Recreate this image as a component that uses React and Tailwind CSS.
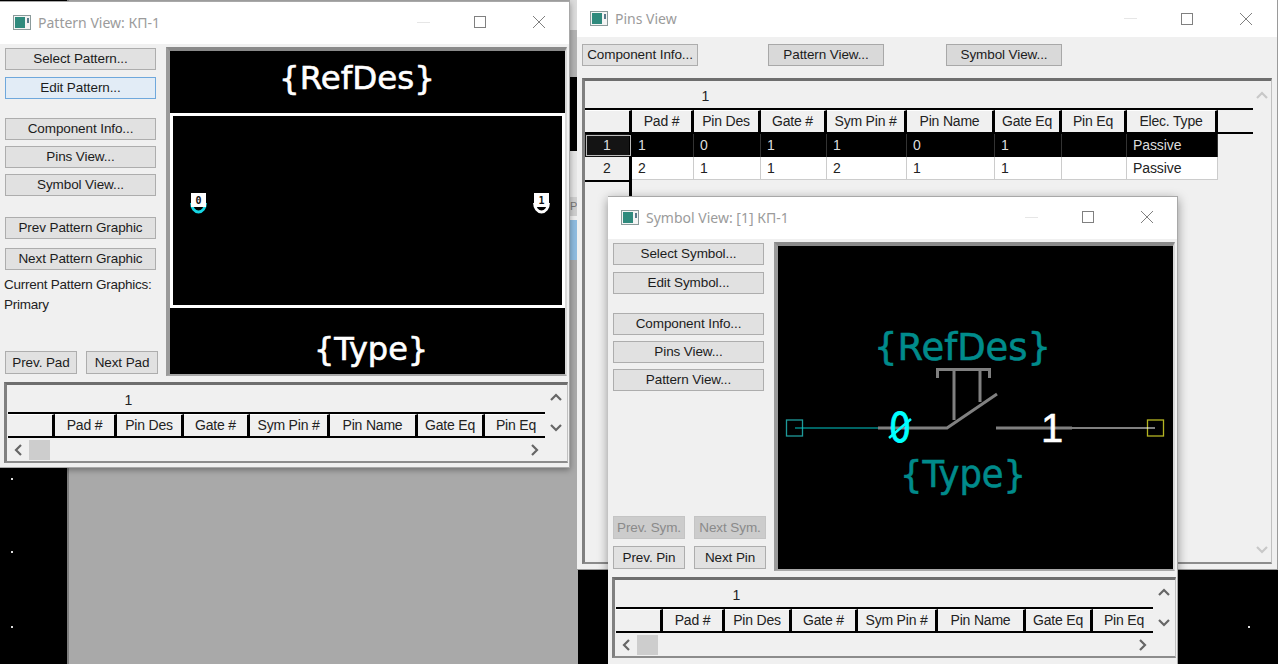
const columns = ["Pad #", "Pin Des", "Gate #", "Sym Pin #", "Pin Name", "Gate Eq", "Pin Eq", "Elec. Type"];
const colWidths = ["w-[62px]", "w-[67px]", "w-[66px]", "w-[80px]", "w-[88px]", "w-[67px]", "w-[65px]", "w-[91px]"];
const pinRows = [
  { id: "1", cells: ["1", "0", "1", "1", "0", "1", "", "Passive"], active: true },
  { id: "2", cells: ["2", "1", "1", "2", "1", "1", "", "Passive"], active: false },
];

function WindowIcon() {
  return (
    <svg width="18" height="15" viewBox="0 0 18 15" className="shrink-0">
      <rect x="0.5" y="0.5" width="17" height="14" fill="#f4f4f4" stroke="#8a9a9a" />
      <rect x="2" y="2" width="10" height="11" fill="#2f8a7d" />
      <rect x="14" y="3" width="2" height="5" fill="#5a7a8a" />
    </svg>
  );
}

function TitleBar({ title, className }) {
  return (
    <div className={`flex items-center bg-white pl-[13px] ${className}`}>
      <WindowIcon />
      <span className="ml-[7px] font-['Noto_Sans'] text-[14px] text-[#9b9b9b]">{title}</span>
      <div className="ml-auto h-px w-[13px] bg-[#e6e6e6]" />
      <div className="ml-[44px] h-[12px] w-[12px] border border-[#808080]" />
      <svg width="12" height="12" viewBox="0 0 12 12" className="ml-[47px]">
        <path d="M0 0L12 12M12 0L0 12" stroke="#808080" strokeWidth="1" />
      </svg>
    </div>
  );
}

function Btn({ children, className = "", variant = "normal" }) {
  const look = {
    normal: "bg-[#e1e1e1] border-[#adadad] text-[#1c1c1c]",
    dark: "bg-[#d9d9d9] border-[#a8a8a8] text-[#1c1c1c]",
    focus: "bg-[#e2ecf6] border-[#6fa8dc] text-[#1c1c1c]",
    off: "bg-[#cccccc] border-[#c4c4c4] text-[#8a8a8a]",
  }[variant];
  return (
    <button className={`flex h-[22px] items-center justify-center border pt-[1px] text-[13.5px] tracking-[-0.1px] ${look} ${className}`}>
      {children}
    </button>
  );
}

function Chevron({ dir, color = "#666666" }) {
  const points = {
    up: "1,7 6,2 11,7",
    down: "1,2 6,7 11,2",
    left: "7,1 2,6 7,11",
    right: "2,1 7,6 2,11",
  }[dir];
  const size = dir === "up" || dir === "down" ? "w-[12px] h-[9px]" : "w-[9px] h-[12px]";
  const box = dir === "up" || dir === "down" ? "0 0 12 9" : "0 0 9 12";
  return (
    <svg viewBox={box} className={`shrink-0 ${size}`}>
      <polyline points={points} fill="none" stroke={color} strokeWidth="2.2" />
    </svg>
  );
}

function HeaderRow({ count }) {
  return (
    <div className="flex h-[26px] w-full min-w-max shrink-0 items-stretch border-y-2 border-black bg-[#f0f0f0]">
      <div className="w-[47px] border-r-[3px] border-black border-t border-t-white bg-[#f0f0f0]" />
      {columns.slice(0, count).map((c, i) => (
        <div
          key={c}
          className={`flex items-center justify-center border-r-[3px] border-t border-r-black border-t-white bg-[#f0f0f0] text-[14px] tracking-[-0.2px] text-[#222] ${colWidths[i]}`}
        >
          {c}
        </div>
      ))}
      <div className="flex-1" />
    </div>
  );
}

function SmallGrid() {
  return (
    <div className="ml-[4px] flex h-[81px] w-[564px] border-t-[3px] border-l-[3px] border-r border-b-2 border-t-[#6e6e6e] border-l-[#808080] border-r-[#c0c0c0] border-b-[#8c8c8c] bg-[#f0f0f0]">
      <div className="flex min-w-0 flex-1 flex-col overflow-hidden pl-[1px]">
        <div className="h-[27px] w-[241px] shrink-0 pt-[5px] text-center text-[14px] text-[#222]">1</div>
        <HeaderRow count={7} />
        <div className="flex h-[23px] items-center pl-[6px] pr-[6px]">
          <Chevron dir="left" />
          <div className="ml-[6px] h-[20px] w-[21px] bg-[#cdcdcd]" />
          <div className="ml-auto">
            <Chevron dir="right" />
          </div>
        </div>
      </div>
      <div className="flex w-[22px] shrink-0 flex-col items-center gap-[21px] pt-[8px]">
        <Chevron dir="up" />
        <Chevron dir="down" />
      </div>
    </div>
  );
}

function PinsGrid() {
  return (
    <div className="ml-[5px] flex h-[486px] w-[690px] border-t-[3px] border-l-[3px] border-r border-b-2 border-t-[#6e6e6e] border-l-[#808080] border-r-[#c0c0c0] border-b-[#8c8c8c] bg-[#f0f0f0]">
      <div className="flex min-w-0 flex-1 flex-col overflow-hidden">
        <div className="h-[27px] w-[241px] shrink-0 pt-[5px] text-center text-[14px] text-[#222]">1</div>
        <HeaderRow count={8} />
        {pinRows.map((row) => (
          <div key={row.id} className="flex h-[23px] shrink-0">
            <div
              className={`flex w-[47px] items-center justify-center border-r-[3px] border-black text-[14px] ${
                row.active ? "bg-[#141414] text-[#dddddd] outline-1 -outline-offset-2 outline-[#bbbbbb]" : "bg-[#f0f0f0] text-[#222]"
              }`}
            >
              {row.id}
            </div>
            {row.cells.map((cell, i) => (
              <div
                key={columns[i]}
                className={`flex items-center border-r pl-[6px] text-[14px] tracking-[-0.1px] ${colWidths[i]} ${
                  row.active ? "border-[#333333] bg-black text-[#dddddd]" : "border-b border-[#cccccc] bg-white text-[#222]"
                }`}
              >
                {cell}
              </div>
            ))}
          </div>
        ))}
        <div className="w-[47px] flex-1 border-t-2 border-r-[3px] border-black" />
      </div>
      <div className="flex w-[18px] shrink-0 flex-col items-center justify-between pt-[10px] pb-[8px]">
        <Chevron dir="up" color="#c8c8c8" />
        <Chevron dir="down" color="#c8c8c8" />
      </div>
    </div>
  );
}

function Canvas({ children }) {
  return (
    <div className="h-[329px] w-[401px] shrink-0 overflow-hidden border-t-4 border-l-4 border-r-2 border-b-2 border-t-[#8a8a8a] border-l-[#9a9a9a] border-r-[#d8d8d8] border-b-[#a8a8a8] bg-black">
      {children}
    </div>
  );
}

function Pad({ label, arc }) {
  return (
    <svg width="17" height="21" viewBox="0 0 17 21" className="shrink-0">
      <path d="M1.5 10 A7 9 0 0 0 15.5 10" fill="#000" stroke={arc} strokeWidth="2.8" />
      <rect x="1" y="0" width="15" height="14" fill="#fff" />
      <text x="8.5" y="10.5" textAnchor="middle" fontSize="10" fontWeight="bold" fontFamily="DejaVu Sans Mono" fill="#111">
        {label}
      </text>
    </svg>
  );
}

function PatternDrawing() {
  const label = "font-['DejaVu_Sans'] leading-none text-white [-webkit-text-stroke:0.6px_white]";
  return (
    <div className="flex h-full flex-col">
      <div className="flex h-[62px] shrink-0 items-center pb-[8px] pl-[109px]">
        <span className={`${label} text-[32.5px]`}>{"{RefDes}"}</span>
      </div>
      <div className="flex h-[195px] shrink-0 items-start justify-between border-[3px] border-white pt-[77px] pr-[12px] pl-[17px]">
        <Pad label="0" arc="#16d6e4" />
        <Pad label="1" arc="#ffffff" />
      </div>
      <div className="flex flex-1 items-center pt-[16px] pl-[144px]">
        <span className={`${label} text-[32px]`}>{"{Type}"}</span>
      </div>
    </div>
  );
}

function SymbolDrawing() {
  return (
    <svg viewBox="778 246 395 323" className="block h-[323px] w-[395px]" fontFamily="DejaVu Sans">
      <text x="874" y="360" fontSize="37" fill="#008b8b" stroke="#008b8b" strokeWidth="0.6" textLength="177" lengthAdjust="spacingAndGlyphs">
        {"{RefDes}"}
      </text>
      <text x="900" y="487" fontSize="38" fill="#008b8b" stroke="#008b8b" strokeWidth="0.6" textLength="126" lengthAdjust="spacingAndGlyphs">
        {"{Type}"}
      </text>
      <rect x="786.5" y="420" width="16" height="16" fill="none" stroke="#1f9a9a" strokeWidth="1.3" />
      <line x1="795" y1="428" x2="880" y2="428" stroke="#00c8c8" strokeWidth="1.2" />
      <rect x="1147.5" y="420" width="16" height="16" fill="none" stroke="#b4b422" strokeWidth="1.3" />
      <line x1="1072" y1="428" x2="1155" y2="428" stroke="#ffffff" strokeWidth="1.2" />
      <g stroke="#808080" strokeWidth="3" fill="none">
        <path d="M878 428H947L997 394" />
        <path d="M996 428H1072" />
        <path d="M937.5 378V369.5H989.5V378" />
        <path d="M954 369.5V420" />
        <path d="M980 369.5V402" />
      </g>
      <text x="900" y="442" textAnchor="middle" fontSize="40" fill="#00ffff" stroke="#00ffff" strokeWidth="0.8" textLength="22" lengthAdjust="spacingAndGlyphs">
        0
      </text>
      <line x1="889" y1="438" x2="911" y2="419" stroke="#00ffff" strokeWidth="2.5" />
      <text x="1052" y="442" textAnchor="middle" fontFamily="Liberation Sans" fontSize="40" fill="#ffffff" stroke="#ffffff" strokeWidth="0.5">
        1
      </text>
    </svg>
  );
}

function SideColumn({ first, edit, nav, middle, bottom }) {
  return (
    <div className="flex w-[159px] shrink-0 flex-col pt-[4px] pb-[3px] pl-[5px]">
      <Btn className="w-[151px]">{first}</Btn>
      <Btn className="mt-[7px] w-[151px]" variant={edit.variant}>{edit.text}</Btn>
      <Btn className="mt-[19px] w-[151px]">{nav[0]}</Btn>
      <Btn className="mt-[6px] w-[151px]">{nav[1]}</Btn>
      <Btn className="mt-[6px] w-[151px]">{nav[2]}</Btn>
      {middle}
      <div className="mt-auto">{bottom}</div>
    </div>
  );
}

function PatternWindow() {
  return (
    <div className="absolute top-[1px] left-0 flex h-[467px] w-[570px] flex-col border-t border-r border-b border-[#a8a8a8] bg-[#f0f0f0] shadow-[0_2px_6px_rgba(0,0,0,0.35)]">
      <TitleBar title="Pattern View: КП-1" className="h-[42px] shrink-0 pr-[24px] pb-[2px]" />
      <div className="flex h-[333px] shrink-0 gap-[7px]">
        <SideColumn
          first="Select Pattern..."
          edit={{ text: "Edit Pattern...", variant: "focus" }}
          nav={["Component Info...", "Pins View...", "Symbol View..."]}
          middle={
            <>
              <Btn className="mt-[21px] w-[151px]">Prev Pattern Graphic</Btn>
              <Btn className="mt-[9px] w-[151px]">Next Pattern Graphic</Btn>
              <p className="mt-[5px] -ml-[1px] whitespace-nowrap text-[13.5px] leading-[20px] tracking-[-0.25px] text-[#222]">
                Current Pattern Graphics:
                <br />
                Primary
              </p>
            </>
          }
          bottom={
            <div className="flex gap-[9px]">
              <Btn className="!h-[23px] w-[72px]">Prev. Pad</Btn>
              <Btn className="!h-[23px] w-[72px]">Next Pad</Btn>
            </div>
          }
        />
        <div className="pt-[3px]">
          <Canvas>
            <PatternDrawing />
          </Canvas>
        </div>
      </div>
      <div className="pt-[5px]">
        <SmallGrid />
      </div>
    </div>
  );
}

function PinsWindow() {
  return (
    <div className="absolute top-0 left-[577px] flex h-[570px] w-[701px] flex-col border-r border-b border-[#9a9a9a] bg-[#f0f0f0]">
      <TitleBar title="Pins View" className="h-[37px] shrink-0 pr-[25px]" />
      <div className="flex pt-[7px] pl-[5px]">
        <Btn className="w-[116px]">Component Info...</Btn>
        <Btn className="ml-[70px] w-[116px]" variant="dark">Pattern View...</Btn>
        <Btn className="ml-[62px] w-[116px]" variant="dark">Symbol View...</Btn>
      </div>
      <div className="pt-[12px]">
        <PinsGrid />
      </div>
    </div>
  );
}

function SymbolWindow() {
  return (
    <div className="absolute top-[196px] left-[608px] flex h-[468px] w-[570px] flex-col border-t border-r border-[#a8a8a8] bg-[#f0f0f0] shadow-[0_3px_10px_rgba(0,0,0,0.4)]">
      <TitleBar title="Symbol View: [1] КП-1" className="h-[42px] shrink-0 pr-[24px] pb-[2px]" />
      <div className="flex h-[333px] shrink-0 gap-[7px]">
        <SideColumn
          first="Select Symbol..."
          edit={{ text: "Edit Symbol...", variant: "normal" }}
          nav={["Component Info...", "Pins View...", "Pattern View..."]}
          bottom={
            <div className="flex flex-col gap-[7px]">
              <div className="flex gap-[9px]">
                <Btn className="!h-[23px] w-[72px]" variant="off">Prev. Sym.</Btn>
                <Btn className="!h-[23px] w-[72px]" variant="off">Next Sym.</Btn>
              </div>
              <div className="flex gap-[9px]">
                <Btn className="!h-[23px] w-[72px]">Prev. Pin</Btn>
                <Btn className="!h-[23px] w-[72px]">Next Pin</Btn>
              </div>
            </div>
          }
        />
        <div className="pt-[3px]">
          <Canvas>
            <SymbolDrawing />
          </Canvas>
        </div>
      </div>
      <div className="pt-[5px]">
        <SmallGrid />
      </div>
    </div>
  );
}

export default function App() {
  return (
    <div className="relative h-[664px] w-[1278px] overflow-hidden bg-black font-['Liberation_Sans',sans-serif]">
      {/* desktop behind the windows */}
      <div className="absolute top-0 bottom-0 left-[67px] w-[511px] border-l-2 border-[#7d7d7d] bg-[#a9a9a9]" />
      <div className="absolute top-0 left-[570px] flex h-[270px] w-[7px] flex-col overflow-hidden">
        <div className="h-[30px] bg-[#dcdcdc]" />
        <div className="h-[47px] bg-[#b4b4b4]" />
        <div className="h-[74px] bg-black" />
        <div className="h-[46px] bg-[#e6e6e6]" />
        <div className="h-[19px] bg-[#cfcfcf] text-[11px] leading-[19px] text-[#777]">P</div>
        <div className="h-[4px] bg-[#f0f0f0]" />
        <div className="h-[40px] bg-[#8fbce0]" />
      </div>
      <div className="absolute top-[478px] left-[11px] h-[2px] w-[2px] bg-[#dddddd]" />
      <div className="absolute top-[551px] left-[11px] h-[2px] w-[2px] bg-[#dddddd]" />
      <div className="absolute top-[626px] left-[11px] h-[2px] w-[2px] bg-[#dddddd]" />
      <div className="absolute top-[626px] left-[1248px] h-[2px] w-[2px] bg-[#dddddd]" />

      <PinsWindow />
      <PatternWindow />
      <SymbolWindow />
    </div>
  );
}
